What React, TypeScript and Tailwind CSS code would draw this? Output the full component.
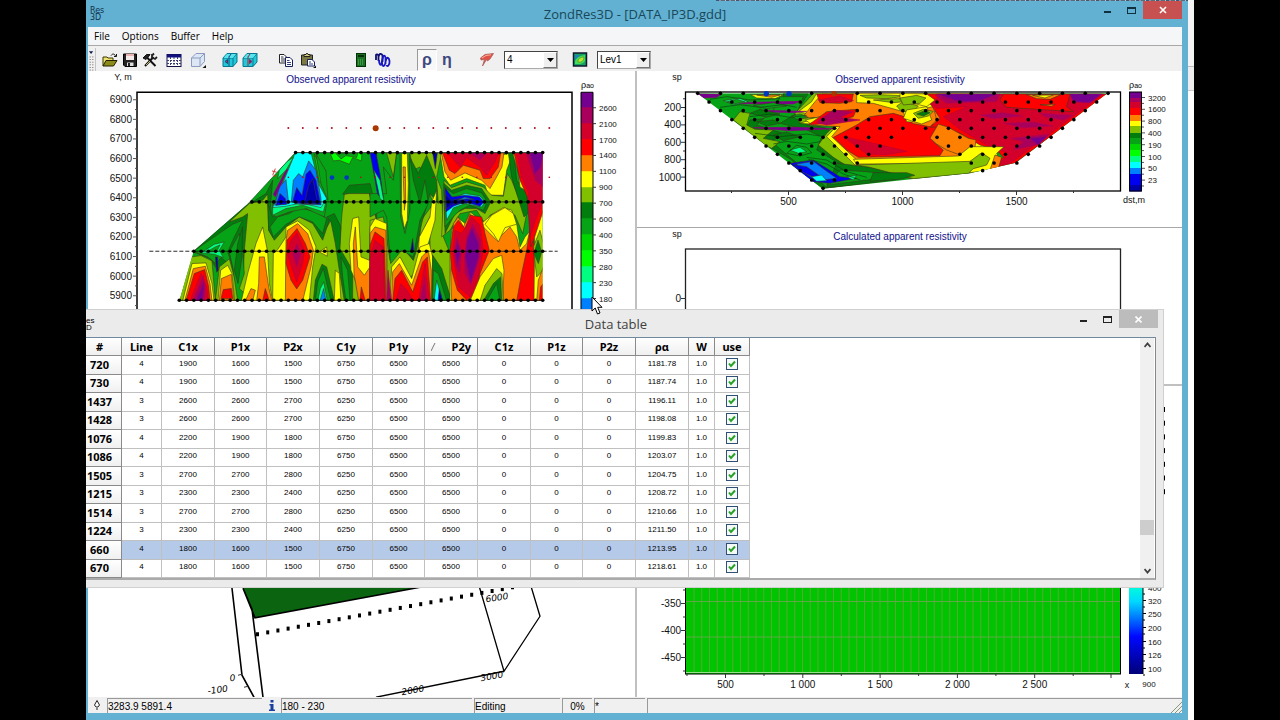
import { useState, type ReactNode } from "react";

type Shape = [string, string];

const C = {
  purple: "#740090",
  maroon: "#a8005c",
  crimson: "#d4002c",
  red: "#ff0000",
  orange: "#ff8000",
  yellow: "#ffff00",
  olive: "#80c000",
  dark: "#007d0c",
  green: "#06a316",
  mid: "#00d400",
  lime: "#00ff00",
  spring: "#00ff80",
  cyan: "#00ffff",
  azure: "#0080ff",
  blue: "#0000f0",
  navy: "#0000a8",
};

const softEdge: Record<string, string> = {
  [C.purple]: "#900070",
  [C.maroon]: "#b8004c",
  [C.crimson]: "#b80030",
};

/* Plan view contours, three units to a pixel, origin at the panel corner. */
const planShapes: Shape[] = [
  [C.dark, "M322 545 L420 440 L500 395 L540 370 L560 330 L548 470 L520 500 L480 560 L455 650 L430 570 L395 600 L372 565 Z"],
  [C.green, "M322 543 L440 462 L470 450 L445 500 L425 545 L440 590 L405 562 L390 580 L365 560 Z"],
  [C.spring, "M345 548 L385 522 L415 515 L400 540 L412 562 L385 552 Z"],
  [C.green, "M360 546 L388 530 L402 524 L392 544 Z"],
  [C.olive, "M278 692 L315 560 L345 556 L378 572 L388 692 L400 590 L430 566 L452 645 L472 610 L475 540 L485 430 L470 440 L430 455 L490 400 L530 390 L545 372 L548 480 L562 503 L600 460 L640 430 L680 450 L705 500 L735 450 L760 535 L768 430 L775 372 L800 365 L850 368 L872 450 L872 692 Z"],
  [C.green, "M455 692 L440 590 L430 545 L460 490 L470 540 L475 610 L460 655 L500 692 Z"],
  [C.dark, "M445 600 L455 520 L470 470 L468 560 L456 640 Z"],
  [C.dark, "M770 372 L790 345 L852 340 L872 420 L872 450 L850 370 L790 370 Z"],
  [C.dark, "M545 400 L560 440 L600 425 L640 405 L700 430 L730 450 L710 510 L680 460 L640 440 L600 470 L565 510 L548 480 Z"],
  [C.green, "M552 470 L575 440 L610 430 L640 412 L690 425 L722 445 L710 490 L680 455 L640 440 L600 462 L562 500 Z"],
  [C.dark, "M722 440 L745 430 L765 470 L762 535 L800 600 L800 692 L775 692 L760 600 L748 520 L735 455 Z"],
  [C.green, "M765 560 L785 600 L792 692 L780 692 L770 620 Z"],
  [C.yellow, "M290 692 L318 580 L360 578 L378 640 L384 692 Z"],
  [C.orange, "M296 692 L322 595 L358 588 L372 640 L378 692 Z"],
  [C.red, "M300 692 L325 610 L356 598 L368 650 L372 692 Z"],
  [C.crimson, "M312 692 L345 610 L362 650 L366 692 Z"],
  [C.maroon, "M320 692 L352 615 L358 650 L356 692 Z"],
  [C.purple, "M330 692 L355 635 L348 692 Z"],
  [C.yellow, "M396 692 L404 600 L425 585 L438 610 L446 692 Z"],
  [C.orange, "M400 692 L406 625 L436 612 L444 692 Z"],
  [C.red, "M405 685 L412 658 L436 655 L440 685 Z"],
  [C.yellow, "M466 692 L485 610 L510 520 L530 470 L545 545 L550 640 L560 692 Z"],
  [C.orange, "M512 692 L518 640 L520 560 L535 560 L548 650 L558 692 Z"],
  [C.red, "M530 692 L538 655 L550 692 Z"],
  [C.orange, "M478 692 L495 655 L508 660 L500 692 Z"],
  [C.yellow, "M560 692 L562 550 L575 538 L600 500 L600 470 L635 452 L670 480 L690 530 L680 590 L670 692 Z"],
  [C.orange, "M598 692 L600 510 L605 480 L635 460 L665 490 L682 540 L675 590 L650 692 Z"],
  [C.red, "M600 580 L603 510 L633 475 L658 520 L672 560 L650 630 L632 656 L615 630 Z"],
  [C.crimson, "M605 555 L612 515 L633 488 L655 540 L650 580 L632 635 L620 600 Z"],
  [C.maroon, "M620 550 L633 520 L645 550 L632 590 Z"],
  [C.dark, "M682 692 L688 630 L708 582 L722 590 L745 692 Z"],
  [C.green, "M688 692 L695 635 L712 595 L725 650 L735 692 Z"],
  [C.spring, "M695 692 L703 655 L713 635 L724 692 Z"],
  [C.azure, "M702 692 L713 655 L720 692 Z"],
  [C.yellow, "M700 545 L722 530 L724 558 Z"],
  [C.yellow, "M745 692 L748 600 L760 610 L765 692 Z"],
  [C.yellow, "M795 600 L790 520 L800 445 L818 440 L825 560 L850 570 L872 470 L872 692 L820 692 L812 640 Z"],
  [C.orange, "M802 520 L808 470 L815 590 L835 615 L852 590 L860 540 L872 500 L872 692 L818 692 L804 610 Z"],
  [C.red, "M850 692 L856 600 L862 530 L872 480 L872 692 Z M822 692 L826 650 L838 692 Z"],
  [C.green, "M560 400 L700 395 L722 400 L715 440 L660 415 L610 425 L570 440 L556 430 Z"],
  [C.spring, "M560 405 L720 395 L712 425 L650 405 L600 415 L560 435 Z"],
  [C.cyan, "M628 247 L675 247 L700 345 L722 385 L705 412 L645 398 L600 408 L560 412 L590 340 Z"],
  [C.azure, "M566 405 L580 350 L600 328 L608 400 Z"],
  [C.blue, "M570 405 L582 370 L598 385 L602 402 Z"],
  [C.azure, "M616 395 L622 330 L638 310 L650 320 L668 272 L690 300 L705 385 L705 404 L640 402 Z"],
  [C.blue, "M620 394 L632 352 L648 375 L660 312 L672 300 L690 330 L704 402 L645 400 Z"],
  [C.navy, "M655 400 L668 345 L680 325 L695 398 Z"],
  [C.mid, "M684 250 L700 280 L718 300 L718 340 L700 335 Z"],
  [C.green, "M690 250 L708 282 L720 302 L726 390 L705 340 Z"],
  [C.lime, "M732 248 L828 248 L826 272 L800 262 L790 282 L760 270 L742 272 Z"],
  [C.green, "M750 250 L815 250 L812 262 L780 256 L765 266 Z"],
  [C.spring, "M580 300 L600 275 L622 262 L600 300 L575 325 Z"],
  [C.purple, "M562 372 L600 300 L606 296 L568 380 Z"],
  [C.blue, "M856 248 L872 248 L872 330 L862 300 Z"],
  [C.navy, "M388 560 L395 560 L396 600 L392 606 Z"],
];

const planShapesEast: Shape[] = [
  [C.olive, "M50 248 L80 248 L70 320 Z"],
  [C.olive, "M120 248 L215 248 L200 320 L215 360 L220 500 L245 560 L250 692 L210 692 L190 560 L140 480 L130 570 L95 530 L60 570 L40 440 L0 450 L0 692 L60 692 L140 600 L180 560 L180 440 L150 500 L150 455 L190 400 L150 290 L128 300 Z"],
  [C.dark, "M122 265 L145 310 L170 255 L200 330 L205 400 L180 370 L155 460 L140 540 L130 570 L100 530 L120 450 Z"],
  [C.green, "M80 250 L90 250 L92 440 L105 490 L120 420 L118 250 L130 330 L150 400 L165 330 L175 400 L150 450 L130 560 L95 540 L62 580 L50 440 L40 420 L0 440 L0 370 L50 370 L40 290 L70 330 Z"],
  [C.yellow, "M95 250 L112 250 L115 340 L112 450 L103 475 L95 430 Z"],
  [C.orange, "M99 290 L106 290 L107 390 L103 420 Z"],
  [C.blue, "M0 248 L18 248 L30 310 L42 395 L22 370 L10 300 Z"],
  [C.spring, "M12 300 L30 330 L42 395 L30 385 Z"],
  [C.navy, "M188 248 L202 248 L196 295 Z M122 540 L128 505 L132 545 Z"],
  [C.yellow, "M145 540 L148 500 L180 440 L185 395 L200 360 L195 450 L175 520 L155 545 Z"],
  [C.yellow, "M0 470 L15 445 L50 460 L52 692 L0 692 Z"],
  [C.orange, "M0 490 L15 470 L48 480 L50 692 L0 692 Z"],
  [C.red, "M0 525 L15 485 L42 505 L48 692 L0 692 Z"],
  [C.crimson, "M0 570 L14 510 L40 530 L44 692 L0 692 Z"],
  [C.yellow, "M60 692 L65 590 L90 560 L125 625 L150 530 L178 520 L188 560 L188 692 Z"],
  [C.orange, "M64 692 L68 605 L88 580 L125 645 L155 560 L175 540 L184 600 L185 692 Z"],
  [C.red, "M68 692 L75 625 L95 600 L128 665 L158 575 L172 560 L182 692 Z"],
  [C.crimson, "M78 692 L92 640 L112 660 L130 692 Z M145 692 L165 580 L178 692 Z"],
  [C.maroon, "M150 692 L164 620 L170 692 Z M50 692 L54 600 L64 692 Z"],
  [C.dark, "M185 692 L188 555 L215 595 L245 692 Z"],
  [C.green, "M188 692 L190 600 L205 610 L230 692 Z"],
  [C.cyan, "M192 692 L200 630 L218 692 Z"],
  [C.navy, "M204 692 L208 655 L218 692 Z"],
  [C.yellow, "M210 248 L240 248 L350 260 L430 248 L410 300 L400 375 L355 375 L345 345 L290 325 L240 345 L222 320 Z"],
  [C.orange, "M214 248 L402 248 L396 290 L380 320 L360 355 L335 330 L285 308 L242 330 L225 305 Z"],
  [C.red, "M218 248 L392 248 L385 290 L360 325 L340 325 L330 300 L280 285 L255 310 L238 300 Z"],
  [C.crimson, "M232 248 L385 248 L375 275 L350 315 L330 290 L290 262 L270 290 Z"],
  [C.maroon, "M300 248 L350 248 L330 270 Z"],
  [C.olive, "M222 330 L245 352 L290 335 L340 350 L365 375 L400 378 L412 310 L425 330 L445 380 L470 430 L458 490 L435 435 L400 415 L360 435 L345 460 L320 420 L270 430 L240 480 L215 500 Z"],
  [C.dark, "M222 340 L245 360 L290 345 L335 355 L362 395 L345 430 L320 415 L285 415 L255 430 L225 490 Z"],
  [C.green, "M224 352 L250 370 L290 355 L335 368 L352 395 L340 420 L300 405 L270 420 L250 440 L225 470 Z"],
  [C.cyan, "M225 365 L250 383 L285 370 L330 377 L345 395 L335 410 L285 400 L250 413 L230 450 Z"],
  [C.blue, "M225 352 L246 380 L285 375 L328 380 L342 395 L330 408 L285 395 L250 408 L228 425 Z"],
  [C.navy, "M226 372 L245 390 L270 385 L300 398 L245 402 L230 415 Z"],
  [C.azure, "M262 390 L285 380 L312 388 L290 386 Z"],
  [C.yellow, "M240 560 L245 480 L262 440 L285 460 L300 425 L340 455 L370 430 L400 412 L425 420 L440 460 L450 530 L465 500 L482 480 L482 692 L240 692 Z"],
  [C.orange, "M242 600 L250 460 L265 440 L280 470 L300 430 L340 470 L380 510 L420 470 L440 500 L450 540 L470 520 L490 440 L490 692 L320 692 L290 692 L245 692 Z"],
  [C.yellow, "M345 462 L365 435 L405 412 L430 430 L440 462 L405 472 L385 515 L370 490 Z"],
  [C.red, "M240 540 L250 470 L265 450 L285 475 L300 435 L335 440 L345 490 L358 540 L330 610 L320 670 L290 690 L262 660 L245 600 Z"],
  [C.crimson, "M248 545 L255 480 L275 490 L305 440 L330 465 L340 540 L325 620 L300 680 L265 650 Z"],
  [C.maroon, "M252 545 L260 500 L275 540 L270 610 L258 590 Z M283 560 L290 500 L308 460 L332 510 L330 560 L302 645 L285 610 Z"],
  [C.purple, "M286 560 L292 510 L306 475 L325 520 L325 560 L302 635 Z M257 545 L262 515 L270 550 L262 585 Z"],
  [C.yellow, "M300 692 L330 620 L370 565 L395 555 L402 600 L398 692 Z"],
  [C.olive, "M330 692 L345 645 L380 595 L396 610 L400 692 Z"],
  [C.dark, "M340 692 L370 640 L392 620 L395 692 Z"],
  [C.green, "M350 692 L380 640 L390 692 Z"],
  [C.red, "M440 692 L455 610 L470 540 L480 480 L492 520 L495 692 Z"],
  [C.dark, "M415 248 L432 248 L440 330 L470 370 L474 430 L462 440 L440 370 L425 320 Z"],
  [C.yellow, "M428 248 L438 248 L450 350 L472 365 L465 350 L452 330 Z"],
  [C.red, "M432 248 L520 248 L520 430 L495 500 L482 530 L472 380 L450 330 Z"],
  [C.crimson, "M440 248 L520 248 L520 390 L500 440 L480 500 L476 370 L455 320 Z"],
  [C.maroon, "M468 248 L520 248 L520 350 L495 330 Z"],
  [C.purple, "M480 248 L520 248 L512 290 L495 310 Z"],
  [C.yellow, "M494 500 L520 420 L520 692 L492 692 Z"],
  [C.olive, "M490 530 L510 480 L520 520 L520 600 L500 620 Z"],
  [C.dark, "M492 550 L504 510 L515 545 L505 580 Z"],
  [C.orange, "M500 692 L505 630 L520 590 L520 692 Z"],
  [C.red, "M508 692 L512 650 L520 640 L520 692 Z"],
];

/* Section contours, three units to a pixel. */
const sectionShapes: Shape[] = [
  [C.dark, "M430 70 L505 70 L480 110 L500 160 L560 175 L590 200 L560 225 L600 260 L680 300 L820 315 L548 358 L510 330 L455 270 L380 225 L320 170 L330 150 L430 140 Z"],
  [C.green, "M420 80 L490 80 L470 130 L420 160 L500 180 L545 200 L530 240 L580 270 L640 305 L760 318 L560 352 L450 262 L395 215 L430 190 L350 165 L400 120 Z"],
  [C.olive, "M280 150 L300 125 L330 130 L320 165 L345 178 L400 180 L370 205 L420 215 L395 235 L380 228 Z"],
  [C.olive, "M535 225 L560 190 L585 165 L660 250 L1010 240 L1040 260 L1020 295 L990 310 L820 327 L700 300 L640 300 L580 262 Z"],
  [C.dark, "M590 280 L680 290 L825 316 L760 330 L640 345 L560 352 Z"],
  [C.green, "M600 300 L680 305 L780 318 L640 335 L560 345 Z"],
  [C.olive, "M465 130 L500 92 L520 70 L560 70 L500 140 L530 150 L480 160 Z"],
  [C.yellow, "M475 125 L515 95 L530 70 L1000 70 L1100 200 L1080 228 L1025 272 L985 275 L880 282 L645 285 L600 240 L560 200 L590 168 L480 160 L540 140 Z"],
  [C.orange, "M485 145 L525 95 L548 70 L920 70 L900 95 L1000 200 L990 250 L960 265 L650 270 L575 200 L600 170 L500 165 L570 140 Z"],
  [C.red, "M530 72 L640 72 L635 95 L600 100 L540 98 Z"],
  [C.crimson, "M535 90 L600 78 L640 92 L560 98 Z"],
  [C.yellow, "M496 150 L560 136 L620 132 L560 150 L510 160 Z"],
  [C.red, "M505 165 L560 125 L650 118 L640 140 L560 160 Z"],
  [C.maroon, "M530 155 L580 120 L640 125 L590 148 Z"],
  [C.red, "M580 202 L650 165 L690 140 L760 130 L860 160 L1000 185 L880 215 L910 240 L900 257 L655 262 L620 240 Z"],
  [C.crimson, "M610 200 L680 215 L760 234 L800 244 L740 254 L680 252 Z"],
  [C.maroon, "M530 158 L600 142 L660 150 L560 165 Z"],
  [C.yellow, "M650 70 L850 70 L870 90 L900 110 L880 130 L870 160 L800 155 L790 125 L700 100 L650 98 Z"],
  [C.olive, "M660 76 L720 74 L800 78 L740 86 L680 84 Z M700 90 L810 84 L870 76 L850 90 L760 98 Z M770 108 L790 95 L835 108 L820 125 L785 125 Z"],
  [C.orange, "M815 160 L830 120 L880 110 L890 150 L870 170 Z"],
  [C.red, "M850 72 L1402 72 L1125 280 L1040 298 L1090 262 L1070 240 L1020 225 L960 190 L900 170 L870 172 L900 145 L870 100 Z"],
  [C.crimson, "M860 95 L930 72 L1390 72 L1345 106 L1110 280 L1072 288 L1105 250 L1040 225 L960 178 L910 140 L980 110 L890 115 Z"],
  [C.maroon, "M885 76 L1080 72 L1070 95 L920 100 Z M1020 135 L1090 128 L1150 138 L1060 146 Z M1090 160 L1180 156 L1240 168 L1150 174 Z M1110 205 L1230 192 L1190 225 L1120 240 L1150 215 Z M1200 130 L1300 136 L1270 150 L1220 142 Z"],
  [C.purple, "M890 72 L1070 72 L1020 92 L960 95 Z M1290 72 L1385 72 L1350 98 L1300 95 Z M1170 205 L1220 200 L1195 225 Z"],
  [C.red, "M1090 72 L1290 72 L1280 110 L1300 125 L1100 112 L1080 90 Z"],
  [C.orange, "M1160 74 L1262 74 L1230 88 L1190 86 Z M1200 104 L1245 103 L1235 109 Z"],
  [C.yellow, "M1178 76 L1240 75 L1215 84 Z"],
  [C.orange, "M870 205 L895 162 L925 172 L985 205 L1008 210 L1005 232 L960 255 L920 240 L890 222 Z"],
  [C.yellow, "M780 70 L860 72 L885 90 L860 110 L875 150 L845 162 L790 145 L800 120 L860 110 L780 90 Z"],
  [C.olive, "M780 84 L830 76 L858 84 L840 100 L790 105 Z M820 130 L850 118 L880 124 L865 138 L835 145 Z"],
  [C.dark, "M830 132 L855 122 L870 128 L850 138 Z"],
  [C.yellow, "M640 268 L955 258 L990 230 L1092 230 L1070 250 L1080 275 L1050 300 L990 308 L985 280 L650 282 Z"],
  [C.olive, "M650 285 L990 274 L1025 248 L1050 265 L1040 285 L1000 296 L985 310 L820 326 L690 292 Z"],
  [C.dark, "M700 308 L800 308 L824 316 L780 328 L690 334 Z"],
  [C.orange, "M1065 255 L1085 262 L1075 295 L1050 300 Z"],
  [C.blue, "M450 280 L520 270 L560 295 L600 320 L650 325 L570 340 L515 335 Z"],
  [C.azure, "M470 282 L520 274 L555 300 L590 325 L530 332 L480 300 Z"],
  [C.blue, "M462 284 L500 290 L540 318 L520 322 L480 302 Z"],
  [C.cyan, "M515 320 L545 315 L560 332 L530 334 Z"],
  [C.purple, "M172 71 L245 73 L230 82 L190 84 Z M285 98 L480 94 L460 102 L300 101 Z M340 173 L470 172 L590 176 L450 182 Z M370 121 L500 124 L460 128 L390 126 Z"],
  [C.spring, "M250 92 L300 84 L325 96 L280 104 Z M450 240 L480 232 L500 245 L475 250 Z M620 320 L650 316 L640 330 Z"],
  [C.dark, "M330 130 L360 118 L420 132 L380 142 Z M400 195 L440 186 L480 200 L430 212 Z M350 155 L400 150 L420 160 L380 168 Z"],
  [C.green, "M260 96 L290 88 L315 96 L284 101 Z M340 106 L400 98 L440 108 L380 116 Z M455 138 L480 132 L505 142 L470 148 Z"],
  [C.yellow, "M332 74 L430 74 L405 86 L350 84 Z"],
  [C.orange, "M350 75 L420 75 L395 82 Z"],
];

const sectionLines = [
  "M210 88 L260 80 L330 90 L420 86",
  "M240 112 L300 104 L360 112 L430 104 L470 112",
  "M330 140 L390 132 L450 142 L500 136",
  "M345 190 L420 200 L500 192 L540 198",
  "M400 222 L440 214 L500 222 L540 215",
  "M440 250 L470 226 L500 232 L515 248 L480 258 Z",
  "M500 262 L560 270 L620 305 L680 322",
  "M505 268 L560 282 L610 312 L660 330",
];

const sectionSkips: Record<number, number[]> = {
  5: [7],
  6: [6, 7],
  7: [5, 6, 7],
  8: [4, 5, 6, 7],
  9: [1, 3, 4, 5, 6, 7, 9, 10],
  10: [2, 3, 4, 5, 6, 7, 8],
  11: [1, 2, 3, 4, 5, 6, 7],
};

const sectionDots = Array.from({ length: 12 }, (_, k) => {
  const y = [70, 96, 122, 149, 175, 202, 228, 253, 279, 302, 330, 355][k];
  const count = Math.max(1, 19 - k);
  return Array.from({ length: count }, (_, i) => i)
    .filter((i) => !(sectionSkips[k] ?? []).includes(i))
    .map((i) => [173 + 34.2 * k + 68.4 * i, y]);
}).flat();

const planDots = (
  [
    [247, 35],
    [395, 41],
    [543, 49],
    [690, 51],
  ] as const
).flatMap(([y, n]) => Array.from({ length: n }, (_, i) => [1370 - 21.8 * i, y]));

function Shapes({ items }: { items: Shape[] }) {
  return (
    <g strokeWidth="1.8" strokeLinejoin="round">
      {items.map(([fill, d], i) => (
        <path key={i} fill={fill} stroke={softEdge[fill] ?? "#3c3820"} d={d} />
      ))}
    </g>
  );
}

function Label({ x, y, children, size = 10, anchor = "middle", fill = "#111" }: {
  x: number;
  y: number;
  children: ReactNode;
  size?: number;
  anchor?: "start" | "middle" | "end";
  fill?: string;
}) {
  return (
    <text x={x} y={y} fontSize={size} textAnchor={anchor} fill={fill}>
      {children}
    </text>
  );
}

function PlanChart() {
  const bar: [string, number][] = [
    [C.purple, 92], [C.maroon, 107], [C.crimson, 123], [C.red, 139], [C.orange, 155], [C.yellow, 171], [C.olive, 187],
    [C.dark, 202], [C.green, 218], [C.mid, 234], [C.lime, 250], [C.spring, 266], [C.cyan, 282], [C.azure, 298],
  ];
  const values = [2600, 2100, 1700, 1400, 1100, 900, 700, 600, 400, 350, 280, 230, 180];
  return (
    <svg className="h-full min-h-0 w-full" viewBox="88 71 547 314" role="img" aria-label="Observed apparent resistivity, plan">
      <clipPath id="plan">
        <path d="M280 692 L323 543 L485 402 L628 247 L1370 247 L1370 692 Z" />
      </clipPath>
      <Label x={123} y={80} size={9}>Y, m</Label>
      <Label x={351} y={83} fill="#10108c">Observed apparent resistivity</Label>
      <path d="M137 385 V92 H572 V385" fill="none" stroke="#000" strokeWidth="1.5" />
      {Array.from({ length: 11 }, (_, i) => {
        const y = 99.5 + i * 19.6;
        return (
          <g key={i}>
            <path d={`M133 ${y} h4 M135 ${y + 9.8} h2`} stroke="#555" />
            <Label x={132} y={y + 3.5} anchor="end">{6900 - i * 100}</Label>
          </g>
        );
      })}
      <g transform="translate(86 70) scale(0.33333)">
        <g clipPath="url(#plan)">
          <path d="M270 240 H1380 V700 H270 Z" fill={C.green} />
          <Shapes items={planShapes} />
          <g transform="translate(852 0)">
            <Shapes items={planShapesEast} />
          </g>
        </g>
        <path d="M323 543 L485 402 L628 247" fill="none" stroke="#064d10" strokeWidth="2" />
        <path d="M628 247 H1370 M498 395 H1370 M323 543 H1370 M280 690 H1370" stroke="#000" strokeWidth="2" />
        <path d="M190 543 H323 M1370 543 H1415" stroke="#000" strokeWidth="2.5" strokeDasharray="12 6" />
        {planDots.map(([x, y], i) => (
          <circle key={i} cx={x} cy={y} r="5.5" />
        ))}
        {Array.from({ length: 19 }, (_, i) => (
          <g key={i} fill="#b01020">
            <circle cx={607 + i * 43.5} cy="173" r="3" />
            <circle cx={607 + i * 43.5} cy="321" r="2.5" />
          </g>
        ))}
        <circle cx="869" cy="174" r="9" fill="#a83800" />
        <g fill="#0038c0">
          <circle cx="738" cy="322" r="7" />
          <circle cx="782" cy="322" r="7" />
        </g>
        <path d="M560 315 l8 -20 M558 302 l14 4 M562 318 l10 -2" stroke="#d02020" strokeWidth="2.5" />
      </g>
      <text x="581" y="88" fontSize="9">ρ<tspan fontSize="7">ao</tspan></text>
      {bar.map(([fill, y], i) => (
        <rect key={i} x="581" y={y} width="12" height="17" fill={fill} />
      ))}
      <path d="M581 385 V92 H593 V385" fill="none" stroke="#000" />
      {values.map((v, i) => (
        <g key={v}>
          <path d={`M593 ${107.5 + i * 15.9} h3`} stroke="#333" />
          <Label x={599} y={110.5 + i * 15.9} size={8} anchor="start">{v}</Label>
        </g>
      ))}
    </svg>
  );
}

function SectionChart() {
  const stops: [string, number][] = [
    [C.purple, 92], [C.maroon, 98], [C.crimson, 102], [C.red, 108], [C.orange, 115], [C.yellow, 121], [C.olive, 126],
    [C.dark, 133], [C.green, 138], [C.mid, 144], [C.lime, 150], [C.spring, 156], [C.cyan, 162], [C.azure, 168], [C.blue, 174], [C.navy, 185],
  ];
  const values = [3200, 1600, 800, 400, 190, 100, 50, 23];
  return (
    <svg className="h-full min-h-0 w-full" viewBox="637 71 545 156" role="img" aria-label="Observed apparent resistivity, section">
      <clipPath id="section">
        <path d="M172 70 H1402 L1128 278 L990 310 L820 327 L548 356 Z" />
      </clipPath>
      <Label x={677} y={80} size={9}>sp</Label>
      <Label x={900} y={83} fill="#10108c">Observed apparent resistivity</Label>
      {[200, 400, 600, 800, 1000].map((v, i) => (
        <g key={v}>
          <path d={`M681 ${107.5 + i * 17.4} h5 M683 ${98.8 + i * 17.4} h3`} stroke="#333" />
          <Label x={681} y={111 + i * 17.4} anchor="end">{v}</Label>
        </g>
      ))}
      <rect x="685.5" y="92" width="435" height="99" fill="#fff" stroke="#000" strokeWidth="1.3" />
      {[500, 1000, 1500].map((v, i) => (
        <g key={v}>
          <path d={`M${788.5 + i * 114} 191 v4 M${731.5 + i * 114} 191 v2`} stroke="#333" />
          <Label x={788.5 + i * 114} y={205}>{v}</Label>
        </g>
      ))}
      <path d="M1073.5 191 v2" stroke="#333" />
      <g transform="translate(640 70) scale(0.33333)">
        <g clipPath="url(#section)">
          <path d="M160 60 H1410 V370 H160 Z" fill={C.green} />
          <Shapes items={sectionShapes} />
          <path d={sectionLines.join(" ")} fill="none" stroke="#123c14" strokeWidth="2" />
        </g>
        {sectionDots.map(([x, y], i) => (
          <circle key={i} cx={x} cy={y} r="5.5" />
        ))}
        <g fill="#0038c0">
          <circle cx="379" cy="71" r="8" />
          <circle cx="447" cy="71" r="8" />
        </g>
        <circle cx="582" cy="71" r="8" fill="#a83800" />
      </g>
      <text x="1129" y="88" fontSize="9">ρ<tspan fontSize="7">ao</tspan></text>
      {stops.map(([fill, y], i) => (
        <rect key={i} x="1129.5" y={y} width="12" height={(stops[i + 1]?.[1] ?? 191) - y + 0.5} fill={fill} />
      ))}
      <rect x="1129.5" y="92" width="12" height="99" fill="none" stroke="#000" />
      {values.map((v, i) => (
        <g key={v}>
          <path d={`M1142 ${97.5 + i * 11.8} h3 M1142 ${103.4 + i * 11.8} h2`} stroke="#555" />
          <Label x={1148} y={100.5 + i * 11.8} size={8} anchor="start">{v}</Label>
        </g>
      ))}
      <Label x={1134} y={203} size={9}>dst,m</Label>
    </svg>
  );
}

function CalculatedChart() {
  return (
    <svg className="h-full min-h-0 w-full" viewBox="637 228 545 156" role="img" aria-label="Calculated apparent resistivity">
      <Label x={677} y={237} size={9}>sp</Label>
      <Label x={900} y={240} fill="#10108c">Calculated apparent resistivity</Label>
      <rect x="685.5" y="249" width="435" height="100" fill="#fff" stroke="#222" strokeWidth="1.3" />
      <path d="M681 298.5 h5" stroke="#333" />
      <Label x={681} y={302} anchor="end">0</Label>
    </svg>
  );
}

function ModelChart() {
  const scale: [number, number][] = [[400, 587], [320, 600], [250, 613], [200, 627], [160, 641], [126, 654], [100, 668]];
  return (
    <svg className="h-full min-h-0 w-full" viewBox="637 386 545 311" role="img" aria-label="Resistivity model">
      <defs>
        <linearGradient id="scale" x1="0" x2="0" y1="0" y2="1">
          <stop offset="0" stopColor={C.lime} />
          <stop offset="0.67" stopColor="#00ffd8" />
          <stop offset="0.73" stopColor="#00d8ff" />
          <stop offset="0.86" stopColor="#0008ff" />
          <stop offset="1" stopColor="#000078" />
        </linearGradient>
      </defs>
      <rect x="685.5" y="406" width="435" height="268" fill="#00c400" stroke="#000" />
      <path
        d={Array.from({ length: 55 }, (_, i) => `M${694 + i * 7.75} 407 V672`).join(" ")}
        stroke="#58a838"
      />
      <path d="M686 601.5 H1120 M686 637 H1120" stroke="#5faa46" />
      <path d="M686 672.5 H1120" stroke="#9be08a" />
      {[-350, -400, -450].map((v, i) => (
        <g key={v}>
          <path d={`M681 ${603.5 + i * 27} h5 M683 ${617 + i * 27} h3`} stroke="#333" />
          <Label x={681} y={607 + i * 27} anchor="end">{v}</Label>
        </g>
      ))}
      <path d="M683 590 h3" stroke="#333" />
      {["500", "1 000", "1 500", "2 000", "2 500"].map((v, i) => (
        <g key={v}>
          <path d={`M${725.5 + i * 77.3} 674 v4 M${764 + i * 77.3} 674 v2`} stroke="#333" />
          <Label x={725.5 + i * 77.3} y={688}>{v}</Label>
        </g>
      ))}
      <path d="M687 674 v2 M1111 674 v4" stroke="#333" />
      <rect x="1129" y="406" width="14" height="268" fill="url(#scale)" />
      <path d="M1143 406 V674" stroke="#000" />
      {scale.map(([v, y]) => (
        <g key={v}>
          <path d={`M1143 ${y + 0.5} h3 M1143 ${y + 7} h2`} stroke="#000" />
          <Label x={1148} y={y + 3.5} size={8} anchor="start">{v}</Label>
        </g>
      ))}
      <path d={Array.from({ length: 7 }, (_, i) => `M1164.5 ${407 + i * 13.7} v5`).join(" ")} stroke="#000" />
      <Label x={1127} y={688} size={9}>x</Label>
      <Label x={1149} y={687} size={8}>900</Label>
    </svg>
  );
}

function VolumeView() {
  return (
    <svg className="h-full min-h-0 w-full" viewBox="88 386 547 311" role="img" aria-label="3D model view">
      <path d="M243 588 L255 617.5 L414 588 L414 440 H200 Z" fill="#0a6410" />
      <g fill="none" stroke="#000" strokeWidth="1.6">
        <path d="M210 420 L232 588 L242 675 L254 697 M243 588 L252 609 L263 697 M243 588 L255 617.5 L420 587" />
        <path d="M478 582 L504 671 L540 616 L531 586 M504 671 L376 697" strokeWidth="1.3" />
      </g>
      {Array.from({ length: 26 }, (_, i) => (
        <rect key={i} x={256 + i * 10.2} y={632 - i * 1.88} width="3" height="4" />
      ))}
      <g fontFamily="DejaVu Sans, sans-serif" fontSize="9" fontStyle="italic">
        <text transform="translate(486 602) rotate(-8)">6000</text>
        <text transform="translate(481 681) rotate(-10)">3000</text>
        <text transform="translate(402 695) rotate(-10)">2000</text>
        <text transform="translate(230 681) rotate(-6)">0</text>
        <text transform="translate(208 694) rotate(-8)">-100</text>
      </g>
      <path d="M238 675 l4 -1 M244 687 l4 -1" stroke="#333" />
    </svg>
  );
}

function ToolButton({ label, children, className = "" }: { label: string; children: ReactNode; className?: string }) {
  return (
    <button type="button" aria-label={label} className={`flex h-5 w-5 items-center justify-center ${className}`}>
      <svg width="16" height="16" viewBox="0 0 16 16" fill="none" aria-hidden="true">
        {children}
      </svg>
    </button>
  );
}

function Combo({ label, options, className = "" }: { label: string; options: string[]; className?: string }) {
  return (
    <label className={`grid h-[18px] w-[54px] border border-t-[#444] border-l-[#444] border-r-[#aaa] border-b-[#aaa] bg-white ${className}`}>
      <select
        aria-label={label}
        className="col-start-1 row-start-1 appearance-none bg-transparent pl-0.5 font-['Liberation_Sans',sans-serif] text-[10px] leading-4 outline-none"
      >
        {options.map((o) => (
          <option key={o}>{o}</option>
        ))}
      </select>
      <span className="pointer-events-none col-start-1 row-start-1 flex w-3.5 items-center justify-center justify-self-end border border-t-white border-l-white border-r-[#777] border-b-[#777] bg-[#f0f0f0]">
        <svg width="7" height="4" viewBox="0 0 7 4" aria-hidden="true">
          <path d="M0 0 H7 L3.5 4 Z" />
        </svg>
      </span>
    </label>
  );
}

function CyanCube({ left }: { left: boolean }) {
  return (
    <>
      <path d="M1 6 L5 1.5 H15 V10 L11 14.5 H1 Z" fill="#20c8d8" stroke="#087890" />
      <path d="M1 6 H11 V14.5 M11 6 L15 1.5" stroke="#087890" />
      <path d="M1.5 6 L5 2 H14 L11 6 Z" fill="#58e4ec" />
      {left ? (
        <path d="M7 4.5 V14 M7 5 L9 2 M5.5 7.5 L3 9.5 L5.5 11.5 Z" stroke="#204880" fill="#c03050" />
      ) : (
        <path d="M6 4.5 V14 M6 5 L8 2 M7.5 7.5 L10 9.5 L7.5 11.5 Z" stroke="#a02848" fill="#3040a0" />
      )}
    </>
  );
}

function Toolbar() {
  return (
    <div className="flex h-[26px] shrink-0 items-center border-t border-[#a8a8a8] bg-[#f0f0f0] pt-0.5">
      <svg width="8" height="24" viewBox="0 0 8 24" aria-hidden="true" className="mr-1 border-r border-[#c4c4c4]">
        <path d="M1 2 H6 L3.5 5 Z" fill="#102050" />
        <path d="M2.5 8 V24 M5.5 8 V24" stroke="#444" strokeDasharray="1 2" />
      </svg>
      <ToolButton label="Open">
        <path d="M1 14 V5 H5 L6 6 H11 V8" fill="#f0e070" stroke="#3a3800" />
        <path d="M1 14 L4 8.5 H15 L11.5 14 Z" fill="#8c8a18" stroke="#222000" />
        <path d="M9 3.5 C10.5 1.5 12.5 1.5 13.5 4 M14.5 2 V4.5 H12" stroke="#111" />
      </ToolButton>
      <ToolButton label="Save">
        <path d="M1.5 2 H14.5 V14.5 H3 L1.5 13 Z" fill="#222" stroke="#000" />
        <path d="M4 2 H12 V8 H4 Z" fill="#f4eaea" />
        <path d="M4 3 H12" stroke="#e07878" />
        <path d="M5 10.5 H11.5 V14 H5 Z" fill="#ddd" />
        <path d="M6 11 H8 V14 H6 Z" fill="#222" />
      </ToolButton>
      <ToolButton label="Settings">
        <path d="M3 14 L11.5 5 M5 5.5 L13.5 14" stroke="#111" strokeWidth="2" />
        <path d="M1 6 L4.5 2.5 H8 L7 4 L4 7.5 Z" fill="#222" stroke="#111" />
        <path d="M10 2 V5.5 L13 7 L15 5 M12 1.5 L10 3.5" stroke="#222" strokeWidth="1.8" />
        <path d="M4 13 L8 9" stroke="#c0b060" />
      </ToolButton>
      <ToolButton label="Data table" className="ml-1">
        <rect x="1" y="2.5" width="14" height="12" fill="#fff" stroke="#101048" />
        <path d="M1 4 H15" stroke="#101080" strokeWidth="3" />
        <path d="M1 8.5 H15 M1 11.5 H15 M4.5 5 V14 M8 5 V14 M11.5 5 V14" stroke="#384070" strokeDasharray="2 1" />
      </ToolButton>
      <ToolButton label="Model" className="ml-1">
        <path d="M1.5 6 L6 1.5 H14.5 V9.5 L10 14.5 H1.5 Z" fill="#dce6f4" stroke="#8c9cc0" />
        <path d="M1.5 6 H10 V14.5 M10 6 L14.5 1.5" stroke="#8c9cc0" />
        <path d="M16 13 V16 H12.5 Z" fill="#111" />
      </ToolButton>
      <ToolButton label="Previous section" className="ml-3"><CyanCube left /></ToolButton>
      <ToolButton label="Next section"><CyanCube left={false} /></ToolButton>
      <ToolButton label="Copy" className="ml-4">
        <path d="M1.5 2.5 H6 L8.5 5 V11 H1.5 Z" fill="#fff" stroke="#222" />
        <path d="M3 5 H5.5 M3 7 H7 M3 9 H7" stroke="#334" />
        <path d="M7.5 5.5 H12 L14.5 8 V14.5 H7.5 Z" fill="#fff" stroke="#182060" />
        <path d="M9 8.5 H11.5 M9 10.5 H13 M9 12.5 H13" stroke="#334080" />
      </ToolButton>
      <ToolButton label="Paste" className="ml-0.5">
        <path d="M1.5 3 H12.5 V13 H1.5 Z" fill="#7c7840" stroke="#222" />
        <path d="M4 4.5 V2.5 H6 L7 1 L8 2.5 H10 V4.5 Z" fill="#d8d080" stroke="#222" />
        <path d="M7.5 7.5 H12 L14.5 10 V14 H7.5 Z" fill="#fff" stroke="#182060" />
        <path d="M9 10 H11 M9 12 H13" stroke="#334080" />
        <path d="M16 13.5 V16 H13 Z" fill="#111" />
      </ToolButton>
      <ToolButton label="Calculator" className="ml-[33px]">
        <rect x="3.5" y="1.5" width="9" height="13" fill="#187020" stroke="#053008" />
        <path d="M5 4 H11" stroke="#062c0a" strokeWidth="2" />
        <path d="M5 8 H11 M5 10 H11 M5 12 H11" stroke="#5fc068" strokeDasharray="1 1" />
      </ToolButton>
      <ToolButton label="Inversion" className="ml-0.5">
        <path d="M1 8 V3 C1.5 2 3 2 3.5 4 V9 M3.5 5 C4 1 7 1 7.5 4 V10" stroke="#0c0c70" strokeWidth="1.8" />
        <path d="M4 8 C4 13 6 14 6.5 11 L8 5 C9 2 11 4 10.5 8 V12 M7 10 C7 15 9 15 10 12 L11 8 C12 4 14 6 14.5 9 C15 14 12 15 11.5 13" stroke="#1818c0" strokeWidth="1.8" />
      </ToolButton>
      <button type="button" aria-pressed="true" className="ml-6 flex h-[22px] w-5 items-center justify-center border border-t-[#999] border-l-[#999] border-r-white border-b-white bg-[#f8f8f8] text-base leading-5 font-bold text-[#404880]">
        ρ
      </button>
      <button type="button" className="flex h-[22px] w-5 items-center justify-center text-base leading-5 font-bold text-[#404880]">
        η
      </button>
      <ToolButton label="Marker" className="ml-5">
        <path d="M1.5 6 L6 2.5 L14.5 1.5 L11 7 L8.5 9 L7.5 7.5 L3.5 14 L5.5 7.5 L2 8 Z" fill="#e05048" stroke="#a86058" strokeWidth="0.8" />
        <path d="M3 6 L7 3.5 L12 2.8" stroke="#ffb098" />
      </ToolButton>
      <Combo label="Line" options={["4", "3", "2", "1"]} className="ml-[7px]" />
      <ToolButton label="Contour map" className="ml-3">
        <rect x="1.5" y="1" width="13" height="13" fill="#18a060" stroke="#101830" strokeWidth="1.5" />
        <path d="M3 11 C3 6 7 4 13 3 V9 C10 13 6 12 3 12 Z" fill="#40e060" />
        <path d="M6 10 C5 7 9 5 12 5 C12 9 9 11 6 10 Z" fill="#b8e830" stroke="#60a020" />
        <path d="M3 3 H8 L3 8 Z" fill="#2080c0" />
      </ToolButton>
      <Combo label="Level" options={["Lev1", "Lev2", "Lev3"]} className="ml-[7px]" />
    </div>
  );
}

const columns: [string, string][] = [
  ["Line", "w-10"], ["C1x", "w-[53px]"], ["P1x", "w-[52px]"], ["P2x", "w-[53px]"], ["C1y", "w-[53px]"], ["P1y", "w-[52px]"], ["P2y", "w-[53px]"],
  ["C1z", "w-[53px]"], ["P1z", "w-[52px]"], ["P2z", "w-[53px]"], ["ρα", "w-[53px]"], ["W", "w-[26px]"],
];

const rows: [number, number, number, number, number, number, string][] = [
  [720, 4, 1900, 1600, 1500, 6750, "1181.78"],
  [730, 4, 1900, 1600, 1500, 6750, "1187.74"],
  [1437, 3, 2600, 2600, 2700, 6250, "1196.11"],
  [1428, 3, 2600, 2600, 2700, 6250, "1198.08"],
  [1076, 4, 2200, 1900, 1800, 6750, "1199.83"],
  [1086, 4, 2200, 1900, 1800, 6750, "1203.07"],
  [1505, 3, 2700, 2700, 2800, 6250, "1204.75"],
  [1215, 3, 2300, 2300, 2400, 6250, "1208.72"],
  [1514, 3, 2700, 2700, 2800, 6250, "1210.66"],
  [1224, 3, 2300, 2300, 2400, 6250, "1211.50"],
  [660, 4, 1800, 1600, 1500, 6750, "1213.95"],
  [670, 4, 1800, 1600, 1500, 6750, "1218.61"],
];

const headCell = "border-r border-b border-[#8a8a8a] bg-linear-to-b from-white to-[#f0f0f0] p-0 text-center text-[11px] leading-4 font-bold";

function DataTable() {
  const [used, setUsed] = useState<Record<number, boolean>>({});
  return (
    <table className="h-[240px] w-[664px] table-fixed border-separate border-spacing-0 font-['Noto_Sans',sans-serif] text-black">
      <thead>
        <tr className="h-[18px]">
          <th className={`w-9 pr-2 ${headCell}`}>#</th>
          {columns.map(([name, width]) => (
            <th key={name} className={`${width} ${headCell}`}>
              {name === "P2y" ? (
                <span className="flex items-center justify-between px-1.5">
                  <svg width="5" height="8" viewBox="0 0 5 8" aria-hidden="true">
                    <path d="M0 8 L4 0" stroke="#777" />
                  </svg>
                  P2y
                </span>
              ) : (
                name
              )}
            </th>
          ))}
          <th className={`w-[35px] ${headCell}`}>use</th>
        </tr>
      </thead>
      <tbody>
        {rows.map(([id, line, c1x, p1x, p2x, c1y, rho]) => (
          <tr key={id} className={id === 660 ? "bg-[#b5c9e8]" : "bg-white"}>
            <th scope="row" className={`${headCell} pr-2`}>{id}</th>
            {[line, c1x, p1x, p2x, c1y, 6500, 6500, 0, 0, 0, rho, "1.0"].map((v, i) => (
              <td key={i} className="border-r border-b border-[#c0c0c0] p-0 pb-0.5 text-center font-['Liberation_Sans',sans-serif] text-[8px] leading-[14px]">
                {v}
              </td>
            ))}
            <td className="border-r border-b border-[#c0c0c0] p-0 pb-0.5">
              <label className="grid place-items-center">
                <input
                  type="checkbox"
                  aria-label={`Use ${id}`}
                  checked={used[id] ?? true}
                  onChange={(e) => setUsed({ ...used, [id]: e.target.checked })}
                  className="peer col-start-1 row-start-1 h-3 w-3 appearance-none border border-[#305078] bg-[#f6faf6]"
                />
                <svg width="8" height="8" viewBox="0 0 8 8" aria-hidden="true" className="pointer-events-none invisible col-start-1 row-start-1 peer-checked:visible">
                  <path d="M1 3.5 L3 6 L7 1.5" fill="none" stroke="#28a028" strokeWidth="2" />
                </svg>
              </label>
            </td>
          </tr>
        ))}
      </tbody>
    </table>
  );
}

function DataDialog() {
  return (
    <section aria-label="Data table" className="absolute top-[309px] right-6 left-0 flex flex-col border-t border-r border-b border-[#d0d0d0] bg-[#ebebeb] pb-[7px]">
      <header className="grid h-[27px] grid-cols-[1fr_auto_1fr] items-center pr-[5px]">
        <span className="text-[8px] leading-[7px]">
          es<br />D
        </span>
        <h2 className="mr-3 font-['Open_Sans',sans-serif] text-[13px] leading-5 text-[#404040]">Data table</h2>
        <div className="flex self-start justify-self-end">
          <button type="button" aria-label="Minimize table" className="flex h-[18px] w-6 items-end justify-center pb-1.5">
            <span className="h-0.5 w-[7px] bg-[#222]" />
          </button>
          <button type="button" aria-label="Maximize table" className="flex h-[18px] w-6 items-center justify-center">
            <span className="h-[7px] w-[9px] border border-t-2 border-[#222]" />
          </button>
          <button type="button" aria-label="Close table" className="flex h-[18px] w-[39px] items-center justify-center bg-[#bcbcbc]">
            <svg width="7" height="7" viewBox="0 0 7 7" aria-hidden="true">
              <path d="M0.5 0.5 L6.5 6.5 M6.5 0.5 L0.5 6.5" stroke="#fff" strokeWidth="1.6" />
            </svg>
          </button>
        </div>
      </header>
      <div className="mr-[7px] flex justify-between overflow-hidden border-t border-r border-b-2 border-t-[#7088a0] border-r-[#888] border-b-[#aaa] bg-white">
        <DataTable />
        <div className="mr-px flex w-3.5 shrink-0 flex-col items-center bg-[#f0f0f0] py-1">
          <svg width="7" height="6" viewBox="0 0 7 6" aria-hidden="true">
            <path d="M0.5 5 L3.5 1.5 L6.5 5" fill="none" stroke="#404040" strokeWidth="1.8" />
          </svg>
          <div className="flex w-full flex-1 flex-col">
            <span className="grow-[21]" />
            <span className="h-[15px] bg-[#cdcdcd]" />
            <span className="grow-[4]" />
          </div>
          <svg width="7" height="6" viewBox="0 0 7 6" aria-hidden="true">
            <path d="M0.5 1 L3.5 4.5 L6.5 1" fill="none" stroke="#404040" strokeWidth="1.8" />
          </svg>
        </div>
      </div>
    </section>
  );
}

const field = "h-[15px] border-t border-l border-[#999]";

export default function App() {
  return (
    <div className="flex h-screen bg-black px-[86px] font-['Liberation_Sans',sans-serif] text-black">
      <div className="relative flex min-w-0 flex-1 flex-col bg-[#62b0d2] pr-1.5 pb-[7px] pl-0.5">
        <header className="grid h-[27px] shrink-0 grid-cols-[1fr_auto_1fr] items-center">
          <span className="pl-0.5 font-['DejaVu_Sans',sans-serif] text-[8px] leading-[7px] text-[#103048]">
            Res<br />3D
          </span>
          <h1 className="font-['Open_Sans',sans-serif] text-[13px] leading-5 text-[#184858]">ZondRes3D - [DATA_IP3D.gdd]</h1>
          <div className="flex self-start justify-self-end">
            <button type="button" aria-label="Minimize" className="flex h-[18px] w-6 items-end justify-center pb-[5px]">
              <span className="h-0.5 w-[7px] bg-[#103040]" />
            </button>
            <button type="button" aria-label="Maximize" className="flex h-5 w-6 items-center justify-center">
              <span className="h-[7px] w-[9px] border border-t-2 border-[#103040]" />
            </button>
            <button type="button" aria-label="Close" className="flex h-[19px] w-[39px] items-center justify-center bg-[#c75050]">
              <svg width="8" height="8" viewBox="0 0 8 8" aria-hidden="true">
                <path d="M1 1 L7 7 M7 1 L1 7" stroke="#fff" strokeWidth="1.6" />
              </svg>
            </button>
          </div>
        </header>
        <nav className="flex h-[18px] shrink-0 items-center gap-3 bg-[#f5f6f7] pl-1.5 font-['Open_Sans',sans-serif] text-[10px] leading-4">
          <button type="button">File</button>
          <button type="button">Options</button>
          <button type="button">Buffer</button>
          <button type="button">Help</button>
        </nav>
        <Toolbar />
        <main className="grid min-h-0 flex-1 grid-cols-[549fr_545fr] bg-white">
          <div className="grid min-h-0 grid-rows-[minmax(0,314fr)_minmax(0,311fr)] border-r-2 border-[#c0c0c0]">
            <PlanChart />
            <VolumeView />
          </div>
          <div className="grid min-h-0 grid-rows-[minmax(0,157fr)_minmax(0,158fr)_minmax(0,311fr)]">
            <div className="min-h-0 border-b border-[#a8a8a8]"><SectionChart /></div>
            <div className="min-h-0 border-b-2 border-[#c0c0c0]"><CalculatedChart /></div>
            <ModelChart />
          </div>
        </main>
        <footer className="flex h-4 shrink-0 items-center gap-0.5 bg-[#f0f0f0] text-[10px] leading-[15px]">
          <span className="flex w-[17px] justify-center">
            <svg width="6" height="10" viewBox="0 0 6 10" aria-hidden="true">
              <path d="M3 0.5 L5.5 5 L4 7 H2 L0.5 5 Z M2 9 H4" fill="#fff" stroke="#222" />
            </svg>
          </span>
          <span className={`w-[155px] ${field}`}>3283.9 5891.4</span>
          <span className="flex w-[15px] justify-center">
            <svg width="6" height="11" viewBox="0 0 6 11" aria-hidden="true">
              <path d="M1.5 0 H4.5 V2.5 H1.5 Z M0.5 4 H4.5 V9.5 H6 V11 H0 V9.5 H1.5 V5.5 H0.5 Z" fill="#1840a0" />
            </svg>
          </span>
          <span className={`w-[191px] ${field}`}>180 - 230</span>
          <span className={`w-[86px] ${field}`}>Editing</span>
          <span className={`w-[30px] text-center ${field}`}>0%</span>
          <span className={`w-[51px] ${field}`}>*</span>
          <span className={`flex flex-1 items-end justify-end ${field}`}>
            <svg width="11" height="11" viewBox="0 0 11 11" aria-hidden="true">
              <path d="M0 11 L11 0 M4 11 L11 4 M8 11 L11 8" stroke="#889878" />
            </svg>
          </span>
        </footer>
        <DataDialog />
        <span className="absolute top-0 right-0 h-px w-[472px] bg-[repeating-linear-gradient(90deg,#3a5a78_0_3px,#9a8aa8_3px_5px,#52707a_5px_9px,#c8c0d0_9px_10px)]" />
        <svg className="pointer-events-none absolute top-[296px] left-[505px]" width="13" height="20" viewBox="0 0 13 20" aria-hidden="true">
          <path d="M1 1 V15 L4.2 12 L6.5 18 L9 17 L6.7 11.3 H11 Z" fill="#fff" stroke="#000" />
        </svg>
      </div>
      <div className="flex w-1.5 shrink-0 flex-col bg-white">
        <span className="h-[67px] border-b border-[#bbb] bg-[#f4f4f4]" />
        <span className="h-6 border-b border-[#ccc] bg-[#ededed]" />
      </div>
    </div>
  );
}
